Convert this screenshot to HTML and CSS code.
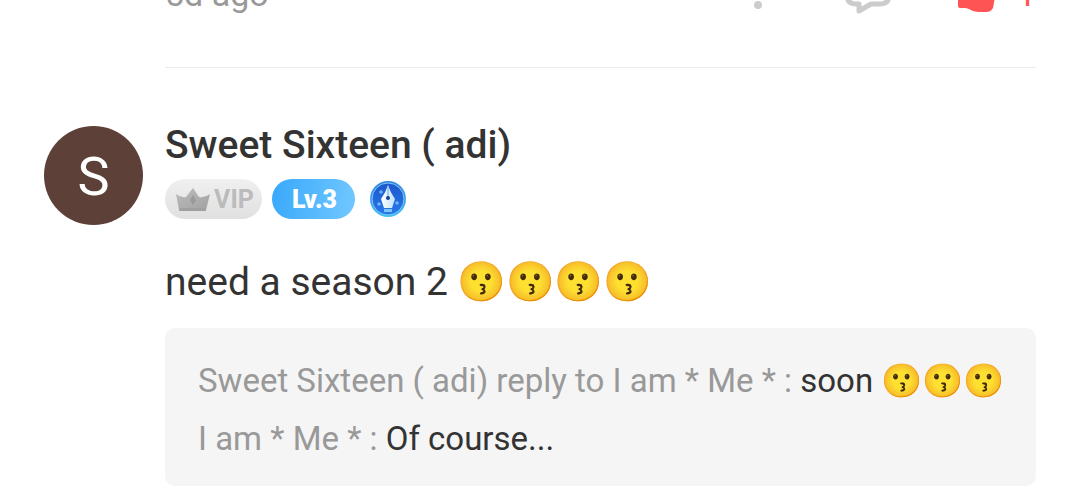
FILE: index.html
```
<!DOCTYPE html>
<html lang="en">

<head>
    <meta charset="UTF-8">
    <meta name="viewport" content="width=device-width, initial-scale=1.0">
    <title>Comments</title>
    <link rel="stylesheet" href="styles.css">
</head>

<body>
    <div class="list">
        <div class="foot">
            <span class="time">5d ago</span>
            <button type="button" class="more" aria-label="More">
                <svg width="10" height="40" viewBox="0 0 10 40">
                    <circle cx="5" cy="7" r="4" />
                    <circle cx="5" cy="20" r="4" />
                    <circle cx="5" cy="33" r="4" />
                </svg>
            </button>
            <button type="button" class="talk" aria-label="Reply">
                <svg width="48" height="44" viewBox="0 0 48 44">
                    <path d="M12 3H36Q45 3 45 12V25Q45 34 36 34H27L15 41V34H12Q3 34 3 25V12Q3 3 12 3Z" />
                </svg>
            </button>
            <button type="button" class="like">
                <svg width="40" height="42" viewBox="0 0 40 42" aria-hidden="true">
                    <path d="M1 16H10L17 2Q24 1 24 8V14H35Q40 15 39 20L36 37Q34 41 29 41H21Q16 41 12 38Q10 37 7 37H3Q1 37 1 35Z" />
                </svg>
                <span class="count">1</span>
            </button>
        </div>

        <div class="comment">
            <div class="avatar">S</div>
            <div class="main">
                <div class="name">Sweet Sixteen ( adi)</div>
                <div class="badges">
                    <span class="vip">
                        <svg width="34" height="24" viewBox="0 0 34 24" aria-hidden="true">
                            <defs>
                                <linearGradient id="crown" x1="0" y1="0" x2="1" y2="1">
                                    <stop offset="0" stop-color="#bcbcbc" />
                                    <stop offset="1" stop-color="#a2a2a2" />
                                </linearGradient>
                            </defs>
                            <path d="M0 6Q5 10 10 9L17 0L23 9Q29 10 34 6L30 22H3Z" fill="url(#crown)" />
                            <path d="M17 7L20 12L17 17L14 12Z" fill="#999" />
                            <path d="M4 20H30V23H3Z" fill="#a0a0a0" />
                        </svg>
                        VIP
                    </span>
                    <span class="level">Lv.3</span>
                    <svg class="pen" width="38" height="38" viewBox="0 0 38 38" role="img" aria-label="Writer">
                        <defs>
                            <linearGradient id="ring" x1="0" y1="0" x2="0" y2="1">
                                <stop offset="0" stop-color="#3685df" />
                                <stop offset="1" stop-color="#3fc0f5" />
                            </linearGradient>
                            <linearGradient id="disc" x1="0" y1="0" x2="0" y2="1">
                                <stop offset="0" stop-color="#1c58cc" />
                                <stop offset="1" stop-color="#2779ec" />
                            </linearGradient>
                            <linearGradient id="nib" x1="0" y1="0" x2="1" y2="0">
                                <stop offset="0" stop-color="#fff" />
                                <stop offset="1" stop-color="#bfe4fb" />
                            </linearGradient>
                        </defs>
                        <circle cx="19" cy="19" r="18" fill="url(#ring)" />
                        <circle cx="19" cy="19" r="16" fill="url(#disc)" stroke="#7fc4f5" stroke-width="1" />
                        <path d="M19 5Q21 12 26 19L23 28H15L12 19Q17 12 19 5Z" fill="url(#nib)" />
                        <path d="M19 7V17" stroke="#6a9de0" stroke-width="1" />
                        <circle cx="19" cy="18" r="2" fill="#17418f" />
                        <path d="M15 29H23V32H15Z" fill="#7cc4f5" />
                        <path d="M12 10V14M10 12H14M28 21V25M26 23H30M10 22V26M8 24H12" stroke="#8cc8fb" stroke-width="1" />
                    </svg>
                </div>
                <div class="text">need a season 2 😗😗😗😗</div>
                <div class="replies">
                    <div class="reply"><span class="who">Sweet Sixteen ( adi) reply to I am * Me * :</span> soon 😗😗😗</div>
                    <div class="reply"><span class="who">I am * Me * :</span> Of course...</div>
                </div>
            </div>
        </div>
    </div>
</body>

</html>
```
FILE: styles.css
```
* {
    margin: 0;
    padding: 0;
    box-sizing: border-box;
}

body {
    background: #fff;
    color: #333;
    font-family: Roboto, "Noto Color Emoji", sans-serif;
    overflow: hidden;
}

button {
    border: 0;
    background: none;
    font: inherit;
}

svg {
    display: block;
}

.list {
    padding: 0 44px;
}

/* the previous comment is scrolled away, only its last line is left */
.foot {
    display: flex;
    align-items: center;
    height: 96px;
    margin-top: -28px;
    margin-left: 121px;
    padding-bottom: 55px;
    border-bottom: 1px solid #ebebeb;
    color: #999;
    font-size: 34px;
    line-height: 44px;
}

.time {
    flex: 1;
}

.time,
.count {
    padding-top: 4px;
}

.more {
    fill: #ccc;
    margin-right: 81px;
}

.talk {
    fill: none;
    stroke: #ccc;
    stroke-width: 5px;
    stroke-linejoin: round;
    margin-right: 65px;
}

.like {
    display: flex;
    align-items: center;
    gap: 20px;
    color: #ff5454;
    fill: #ff5454;
}

.comment {
    display: flex;
    gap: 22px;
    padding-top: 55px;
}

.avatar {
    flex: none;
    width: 99px;
    height: 99px;
    margin-top: 3px;
    border-radius: 50%;
    background: #5d4138;
    color: #fff;
    font-size: 54px;
    line-height: 102px;
    text-align: center;
}

.main {
    flex: 1;
    min-width: 0;
}

.name {
    font-size: 39px;
    font-weight: 500;
    line-height: 44px;
}

.badges {
    display: flex;
    align-items: center;
    height: 40px;
    margin-top: 12px;
}

.vip,
.level {
    display: flex;
    align-items: center;
    justify-content: center;
    height: 40px;
    padding-top: 1px;
    border-radius: 20px;
    font-size: 25px;
    font-weight: 700;
}

.vip {
    gap: 4px;
    width: 97px;
    padding-left: 3px;
    background: linear-gradient(#f0f0f0, #e0e0e0);
    color: #bbb;
}

.level {
    width: 83px;
    margin: 0 14px 0 10px;
    padding-left: 2px;
    background: linear-gradient(100deg, #38a8fb, #72c8ff);
    color: #fff;
    font-weight: 900;
}

.text {
    margin-top: 40px;
    font-size: 39px;
    line-height: 46px;
}

.replies {
    margin-top: 23px;
    padding: 24px 20px 18px 33px;
    border-radius: 10px;
    background: #f5f5f5;
}

.reply {
    font-size: 33px;
    line-height: 58px;
}

.who {
    color: #999;
}
```
